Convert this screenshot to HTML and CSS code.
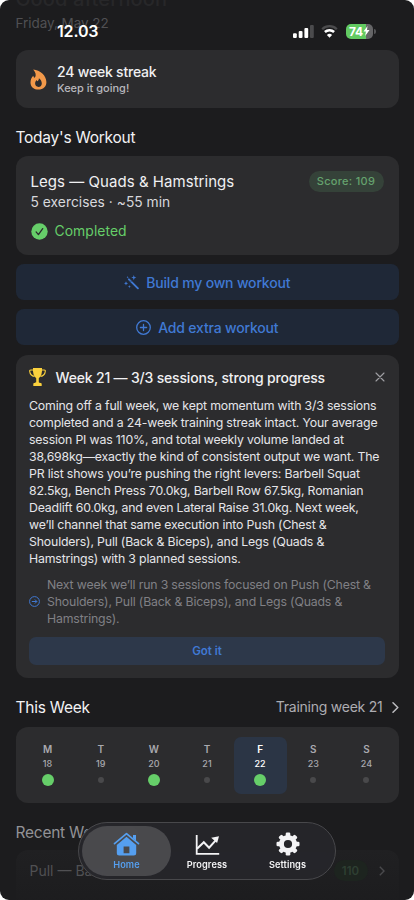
FILE: index.html
```html
<!DOCTYPE html>
<html lang="en">
<head>
<meta charset="utf-8">
<meta name="viewport" content="width=device-width, initial-scale=1">
<title>Workout Home</title>
<link rel="stylesheet" href="styles.css">
</head>
<body>
<div class="phone">
  <header class="top">
    <div class="greeting">Good afternoon</div>
    <div class="date">Friday, May 22</div>
    <div class="status">
      <span class="clock">12.03</span>
      <div class="indicators">
        <svg class="signal" width="21" height="13" viewBox="0 0 21 13"><g fill="#fff"><rect x="0" y="8.2" width="3.8" height="4.8" rx="1.1"/><rect x="5.7" y="6" width="3.8" height="7" rx="1.1"/><rect x="11.4" y="3" width="3.8" height="10" rx="1.1"/></g><rect x="17" y="0" width="3.8" height="13" rx="1.1" fill="#4b4b4d"/></svg>
        <svg class="wifi" width="17" height="13" viewBox="0 0 17 13"><path d="M1.2 4.2a10.4 10.4 0 0 1 14.6 0" fill="none" stroke="#4b4b4d" stroke-width="2.3"/><path d="M3.9 7a6.6 6.6 0 0 1 9.2 0" fill="none" stroke="#fff" stroke-width="2.5"/><path d="M8.5 12.8 5.9 10a3.8 3.8 0 0 1 5.2 0z" fill="#fff"/></svg>
        <div class="battery"><span>74</span><svg width="7" height="10" viewBox="0 0 7 10"><path d="M4.5 0 .5 5.6h2.4L2.2 10 6.5 4H4z" fill="#fff"/></svg></div>
      </div>
    </div>
  </header>

  <main>
    <section class="card streak">
      <svg width="17" height="21" viewBox="0 0 17 21"><path fill="#f2994a" fill-rule="evenodd" d="M3.2.4C10 1 16.4 6.400 16.4 13c0 4.600-3.300 7.600-7.900 7.600S.5 17.700.5 13.400c0-2.900 1.200-5.200 2.800-6.700.2 1.100.7 1.900 1.500 2.100C6.500 6.200 5.800 3.200 3.200.4zM8.900 9.200c.1 1.700-.6 2.200-1.500 3-.4-.2-.7-.7-.8-1.100-1 1-1.500 2.200-1.500 3.500 0 2 1.400 3.300 3.400 3.300s3.300-1.400 3.300-3.400c0-2.300-1.100-4.200-2.900-5.300z"/></svg>
      <div><div class="streak-title">24 week streak</div><div class="streak-sub">Keep it going!</div></div>
    </section>

    <h2 class="heading today">Today's Workout</h2>
    <section class="card workout">
      <div class="workout-head"><span class="workout-name">Legs — Quads &amp; Hamstrings</span><span class="score">Score: 109</span></div>
      <div class="workout-meta">5 exercises · ~55 min</div>
      <div class="completed"><svg width="17" height="17" viewBox="0 0 17 17"><circle cx="8.500" cy="8.500" r="8.200" fill="#66ce69"/><path d="m5.100 8.900 2.300 2.700 4.300-6" fill="none" stroke="#2c2c2e" stroke-width="1.300" stroke-linecap="round" stroke-linejoin="round"/></svg><span>Completed</span></div>
    </section>

    <button class="action build"><svg width="15" height="15" viewBox="0 0 15 15"><path d="m4.900 4.300 9 9" stroke="currentColor" stroke-width="1.900" stroke-linecap="round"/><path d="m6 5.500 1.500 1.500" stroke="#1f2837" stroke-width=".6"/><path fill="currentColor" d="m9.800 0 .7 1.900 1.900.7-1.900.7-.7 1.900-.7-1.900-1.900-.7 1.900-.7zM2 6.200l.6 1.600 1.500.5-1.500.6L2 10.500l-.6-1.600L0 8.300l1.400-.5zM5.400 10l.4 1.200 1.200.4-1.200.5-.4 1.100-.4-1.100-1.200-.5 1.200-.4zM3.700 1l.3.900.9.300-.9.400-.3.800-.4-.8-.8-.4.800-.3z"/></svg><span>Build my own workout</span></button>
    <button class="action extra"><svg width="15" height="15" viewBox="0 0 15 15" fill="none" stroke="currentColor" stroke-width="1.300" stroke-linecap="round"><circle cx="7.500" cy="7.500" r="6.800"/><path d="M4.400 7.500h6.200M7.500 4.400v6.200"/></svg><span>Add extra workout</span></button>

    <section class="card summary">
      <div class="summary-head">
        <svg width="17" height="18" viewBox="0 0 17 18"><path fill="#fbd13d" d="M4 0h9c.3 4.700-.6 8.500-3.200 10.200v3.900c.1.700.8.900 1.700.9.800 0 1.200.4 1.200 1.100V18H4.300v-1.900c0-.7.4-1.100 1.200-1.100.9 0 1.600-.2 1.700-.9v-3.900C4.600 8.500 3.700 4.700 4 0z"/><path d="M4 2H1.800C.8 2 .6 2.500.7 3.400 1 5.900 2.600 8 5.500 8.400M13 2h2.200c1 0 1.200.5 1.100 1.400-.3 2.500-1.900 4.600-4.800 5" fill="none" stroke="#fbd13d" stroke-width="1.100"/></svg>
        <span class="summary-title">Week 21 — 3/3 sessions, strong progress</span>
        <svg class="close" width="10" height="10" viewBox="0 0 10 10"><path d="m1 1 8 8m0-8-8 8" stroke="#a0a0a4" stroke-width="1.100" stroke-linecap="round"/></svg>
      </div>
      <p class="summary-text">Coming off a full week, we kept momentum with 3/3 sessions<br>completed and a 24-week training streak intact. Your average<br>session PI was 110%, and total weekly volume landed at<br>38,698kg—exactly the kind of consistent output we want. The<br>PR list shows you’re pushing the right levers: Barbell Squat<br>82.5kg, Bench Press 70.0kg, Barbell Row 67.5kg, Romanian<br>Deadlift 60.0kg, and even Lateral Raise 31.0kg. Next week,<br>we’ll channel that same execution into Push (Chest &amp;<br>Shoulders), Pull (Back &amp; Biceps), and Legs (Quads &amp;<br>Hamstrings) with 3 planned sessions.</p>
      <div class="next"><svg width="11" height="11" viewBox="0 0 11 11" fill="none" stroke="#4079d3" stroke-width="1"><circle cx="5.500" cy="5.500" r="4.900"/><path d="M2.800 5.500h5M5.900 3.500l2 2-2 2"/></svg><p>Next week we’ll run 3 sessions focused on Push (Chest &amp;<br>Shoulders), Pull (Back &amp; Biceps), and Legs (Quads &amp;<br>Hamstrings).</p></div>
      <button class="got-it">Got it</button>
    </section>

    <div class="week-head"><h2 class="heading">This Week</h2><div class="week-link"><span>Training week 21</span><svg width="7" height="11" viewBox="0 0 7 11"><path d="m1 .8 4.800 4.700L1 10.200" fill="none" stroke="#bcbcc0" stroke-width="1.500" stroke-linecap="round" stroke-linejoin="round"/></svg></div></div>
    <section class="card days">
      <div class="day done"><b>M</b><span>18</span><i></i></div>
      <div class="day"><b>T</b><span>19</span><i></i></div>
      <div class="day done"><b>W</b><span>20</span><i></i></div>
      <div class="day"><b>T</b><span>21</span><i></i></div>
      <div class="day done current"><b>F</b><span>22</span><i></i></div>
      <div class="day"><b>S</b><span>23</span><i></i></div>
      <div class="day"><b>S</b><span>24</span><i></i></div>
    </section>

    <h2 class="heading recent-title">Recent Workouts</h2>
    <section class="recent"><span class="recent-name">Pull — Back</span><span class="recent-score">110</span><svg width="6" height="10" viewBox="0 0 6 10"><path d="m.8.800 4.200 4.200L.8 9.200" fill="none" stroke="#49494c" stroke-width="1.400"/></svg></section>
  </main>

  <nav class="tabs">
    <a class="tab active"><svg width="27" height="24" viewBox="0 0 27 24"><path d="M1.500 11.700 13.500 1.600l12 10.100" fill="none" stroke="currentColor" stroke-width="1.700" stroke-linecap="round" stroke-linejoin="round"/><path fill="currentColor" d="M20 3h3v5.800l-3-2.600z"/><path fill="currentColor" fill-rule="evenodd" d="M13.500 4.700 23.200 12.900V21q0 2.500-2.500 2.500H6.300Q3.800 23.500 3.800 21v-8.100zM10.600 14.600v6.600h5.800v-6.600z"/></svg><span>Home</span></a>
    <a class="tab"><svg width="25" height="22" viewBox="0 0 25 22"><path d="M1.700 1v18.800h22.500" fill="none" stroke="currentColor" stroke-width="1.800"/><path d="m2 14.800 6.800-6.600 5.300 5.500 6.800-7.500" fill="none" stroke="currentColor" stroke-width="2"/><path d="m24 2.200-7.800 1.500 5.900 5.400z" fill="currentColor"/></svg><span>Progress</span></a>
    <a class="tab"><svg width="24" height="24" viewBox="0 0 24 24"><g fill="currentColor"><path fill-rule="evenodd" d="M12 3a9 9 0 1 0 0 18 9 9 0 0 0 0-18zm0 4.900a4.100 4.100 0 1 1 0 8.200 4.100 4.100 0 0 1 0-8.200z"/><g id="teeth"><rect x="9.700" y=".5" width="4.600" height="5" rx="1.300"/><rect x="9.700" y="18.500" width="4.600" height="5" rx="1.300"/><rect x=".5" y="9.700" width="5" height="4.600" rx="1.300"/><rect x="18.500" y="9.700" width="5" height="4.600" rx="1.300"/></g><use href="#teeth" transform="rotate(45 12 12)"/></g></svg><span>Settings</span></a>
  </nav>
</div>
</body>
</html>
```
FILE: styles.css
```css
* { box-sizing: border-box; }
html, body { margin: 0; background: #fff; }
body { font-family: Inter, "Liberation Sans", sans-serif; color: #f0f0f2; width: 414px; height: 900px; overflow: hidden; }
button { border: 0; font: inherit; padding: 0; }
h2, p { margin: 0; font-weight: 400; }
svg { display: block; flex: none; }
.phone { position: relative; width: 414px; height: 900px; overflow: hidden; border-radius: 9px; background: #1c1c1e; white-space: nowrap; }
.top { display: flow-root; position: relative; height: 50px; padding: 0 15.5px; }
.greeting { height: 14px; margin-top: -10px; font-size: 20px; line-height: 19px; letter-spacing: .15px; color: #272729; font-weight: 500; }
.date { margin-top: 10px; font-size: 13.5px; line-height: 18px; letter-spacing: -.05px; color: #505053; }
.status { position: absolute; inset: 21px 37px auto 57px; display: flex; justify-content: space-between; align-items: center; height: 20px; }
.clock { font-size: 16px; font-weight: 600; letter-spacing: -.15px; color: #fff; }
.indicators { display: flex; align-items: center; }
.wifi { margin-left: 7.500px; }
.battery { position: relative; display: flex; align-items: center; justify-content: center; margin: 0 4px 0 8px; width: 27px; height: 15px; border-radius: 5px; background: linear-gradient(90deg, #62ca62 74%, #656567 74%); color: #fff; font-size: 12px; font-weight: 700; letter-spacing: -.2px; }
.battery::after { content: ""; position: absolute; left: 28px; top: 5px; width: 1.500px; height: 5px; background: #555558; border-radius: 0 2px 2px 0; }
main { padding: 0 15.500px; }
.card { background: #2c2c2e; border-radius: 12px; }
.streak { height: 58px; display: flex; align-items: center; padding-left: 14px; gap: 10.500px; }
.streak-title { font-size: 14px; font-weight: 500; line-height: 19px; letter-spacing: -.2px; }
.streak-sub { font-size: 11px; font-weight: 500; line-height: 15px; color: #b8b8bd; }
.heading { font-size: 15.500px; line-height: 20px; letter-spacing: -.25px; color: #f2f2f4; }
.today { margin: 20px 0 8px; }
.workout { height: 99px; padding: 14px 15px 0; }
.workout-head { display: flex; justify-content: space-between; align-items: center; height: 22px; }
.workout-name { font-size: 15px; letter-spacing: .04px; }
.score { height: 21px; width: 75px; display: grid; place-items: center; border-radius: 11px; background: #354239; color: #65a36e; font-size: 11px; font-weight: 500; letter-spacing: .3px; }
.workout-meta { font-size: 13.800px; line-height: 20px; letter-spacing: .03px; color: #d8d8dd; }
.completed { display: flex; align-items: center; gap: 7px; margin-top: 9px; height: 20px; color: #66ce69; font-size: 13.900px; letter-spacing: .06px; }
.action { display: flex; align-items: center; justify-content: center; gap: 7.500px; width: 100%; height: 36px; margin-top: 9px; border-radius: 8px; background: #1f2837; color: #4079d3; font-size: 14px; font-weight: 500; letter-spacing: -.18px; }
.summary { margin-top: 10px; height: 323px; padding: 12px 13.500px; }
.summary-head { display: flex; align-items: center; height: 20px; }
.summary-title { margin-left: 9.500px; font-size: 14px; font-weight: 500; letter-spacing: -.18px; }
.close { margin-left: auto; }
.summary-text { margin-top: 10px; font-size: 12.300px; line-height: 17px; letter-spacing: -.165px; color: #e5e5e9; }
.next { display: flex; align-items: center; gap: 7px; margin-top: 9px; color: #808085; font-size: 12.300px; line-height: 17px; letter-spacing: -.165px; }
.got-it { display: block; width: 100%; height: 28px; margin-top: 10px; border-radius: 7px; background: #2d384a; color: #4079d3; font-size: 11.500px; font-weight: 600; }
.week-head { display: flex; align-items: center; justify-content: space-between; height: 20px; margin: 19px 0 10px; }
.week-head .heading { padding-top: 1px; }
.week-link { display: flex; align-items: center; gap: 9px; font-size: 14px; line-height: 18px; letter-spacing: -.24px; color: #adadb2; }
.days { display: flex; height: 76px; padding: 10px 5.500px 9px; }
.day { flex: 1; display: flex; flex-direction: column; align-items: center; border-radius: 7px; padding-top: 5px; color: #a9a9ae; }
.day b { font-size: 10px; line-height: 14px; font-weight: 600; }
.day span { font-size: 9px; line-height: 12px; margin-top: 2px; font-weight: 500; }
.day i { width: 6px; height: 6px; border-radius: 50%; background: #49494b; margin-top: 7px; }
.done i { width: 12px; height: 12px; margin-top: 4px; background: #66ce69; }
.current { background: #2b3545; color: #fff; }
.recent-title { margin: 20px 0 7px; color: #929296; }
.recent { display: flex; align-items: center; height: 60px; border-radius: 12px; padding: 0 14px 19px; background: linear-gradient(#202022, #1c1c1e); color: #505053; font-size: 14px; }
.recent-score { display: grid; place-items: center; width: 34px; height: 21px; margin-left: auto; margin-right: 11px; border-radius: 11px; background: #1d241f; color: #2e3f32; font-size: 11.500px; font-weight: 600; }
.tabs { position: absolute; left: 78px; top: 822px; width: 258px; height: 58px; display: flex; padding: 3px; border: 1px solid #48484b; border-radius: 29px; background: rgba(39, 39, 43, .85); backdrop-filter: blur(4px); }
.tab { width: 89px; display: flex; flex-direction: column; align-items: center; justify-content: flex-end; border-radius: 25px; color: #f3f3f5; padding-bottom: 5px; margin-right: -8.500px; font-size: 9.200px; font-weight: 600; line-height: 12px; letter-spacing: .1px; }
.tab svg { margin-bottom: 3px; }
.active { color: #559ff0; background: rgba(80, 80, 83, .85); }
```
